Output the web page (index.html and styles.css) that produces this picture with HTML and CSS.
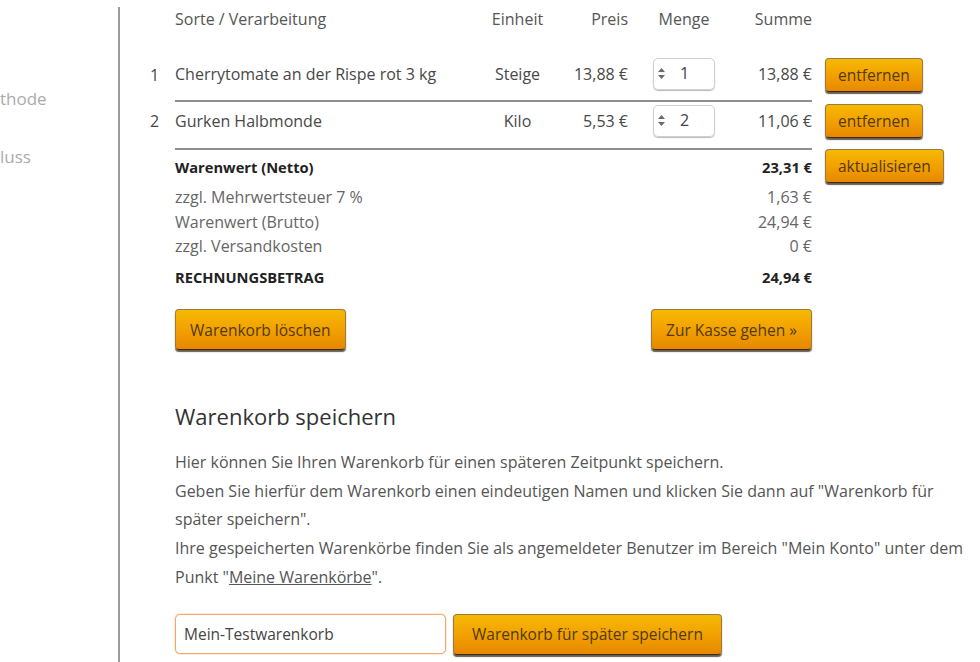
FILE: index.html
```html
<!DOCTYPE html>
<html lang="de">
<head>
  <meta charset="UTF-8">
  <meta name="viewport" content="width=device-width, initial-scale=1.0">
  <title>Warenkorb</title>
  <link rel="stylesheet" href="styles.css">
</head>
<body>
  <div class="page">
    <nav class="sidebar">
      <ul class="steps">
        <li>thode</li>
        <li>luss</li>
      </ul>
    </nav>

    <main class="main">
      <table class="cart">
        <colgroup>
          <col class="c-num">
          <col class="c-name">
          <col class="c-unit">
          <col class="c-price">
          <col class="c-qty">
          <col class="c-sum">
          <col class="c-action">
        </colgroup>
        <thead>
          <tr>
            <th></th>
            <th class="left">Sorte / Verarbeitung</th>
            <th class="center">Einheit</th>
            <th class="right">Preis</th>
            <th class="center qty-head">Menge</th>
            <th class="right">Summe</th>
            <th></th>
          </tr>
        </thead>
        <tbody>
          <tr class="item item-first">
            <td class="num">1</td>
            <td class="line">Cherrytomate an der Rispe rot 3 kg</td>
            <td class="line center">Steige</td>
            <td class="line right">13,88 €</td>
            <td class="line"><span class="qty"><svg width="9" height="15" viewBox="0 0 9 15"><path d="M1 6 L4.5 2 L8 6 Z M1 9 L4.5 13 L8 9 Z" fill="#6a6a6a"/></svg>1</span></td>
            <td class="line right">13,88 €</td>
            <td class="action"><button class="btn">entfernen</button></td>
          </tr>
          <tr class="item item-second">
            <td class="num">2</td>
            <td class="line">Gurken Halbmonde</td>
            <td class="line center">Kilo</td>
            <td class="line right">5,53 €</td>
            <td class="line"><span class="qty"><svg width="9" height="15" viewBox="0 0 9 15"><path d="M1 6 L4.5 2 L8 6 Z M1 9 L4.5 13 L8 9 Z" fill="#6a6a6a"/></svg>2</span></td>
            <td class="line right">11,06 €</td>
            <td class="action"><button class="btn">entfernen</button></td>
          </tr>
          <tr class="sum sum-netto strong">
            <td></td>
            <td colspan="4">Warenwert (Netto)</td>
            <td class="right">23,31 €</td>
            <td class="action"><button class="btn">aktualisieren</button></td>
          </tr>
          <tr class="sum sum-tax">
            <td></td>
            <td colspan="4">zzgl. Mehrwertsteuer 7 %</td>
            <td class="right">1,63 €</td>
            <td></td>
          </tr>
          <tr class="sum">
            <td></td>
            <td colspan="4">Warenwert (Brutto)</td>
            <td class="right">24,94 €</td>
            <td></td>
          </tr>
          <tr class="sum">
            <td></td>
            <td colspan="4">zzgl. Versandkosten</td>
            <td class="right">0 €</td>
            <td></td>
          </tr>
          <tr class="sum sum-total strong">
            <td></td>
            <td colspan="4">RECHNUNGSBETRAG</td>
            <td class="right">24,94 €</td>
            <td></td>
          </tr>
        </tbody>
      </table>

      <div class="cart-actions">
        <button class="btn btn-big">Warenkorb löschen</button>
        <button class="btn btn-big">Zur Kasse gehen »</button>
      </div>

      <section class="save">
        <h2>Warenkorb speichern</h2>
        <p>
          Hier können Sie Ihren Warenkorb für einen späteren Zeitpunkt speichern.<br>
          Geben Sie hierfür dem Warenkorb einen eindeutigen Namen und klicken Sie dann auf "Warenkorb für später speichern".<br>
          Ihre gespeicherten Warenkörbe finden Sie als angemeldeter Benutzer im Bereich "Mein Konto" unter dem Punkt "<a href="#">Meine Warenkörbe</a>".
        </p>
        <form class="save-form">
          <input type="text" class="save-input" value="Mein-Testwarenkorb">
          <button type="button" class="btn btn-big btn-save">Warenkorb für später speichern</button>
        </form>
      </section>
    </main>
  </div>
</body>
</html>
```

FILE: styles.css
```css
body {
  margin: 0;
  font-family: "Open Sans", "Noto Sans", sans-serif;
  font-size: 16px;
  color: #555;
  background: #fff;
}
.page {
  display: flex;
  min-height: 720px;
}
.sidebar {
  width: 118px;
  margin-top: 7px;
  border-right: 2px solid #9c9c9c;
  flex-shrink: 0;
}
.steps {
  list-style: none;
  margin: 80px 0 0;
  padding: 0;
  font-size: 17px;
  color: #ababab;
}
.steps li {
  height: 58px;
  line-height: 24px;
}
.main {
  padding-left: 25px;
  flex: 1;
}

/* Warenkorb-Tabelle */
.cart {
  border-collapse: collapse;
  table-layout: fixed;
  width: 835px;
}
.c-num { width: 30px; }
.c-name { width: 295px; }
.c-unit { width: 95px; }
.c-price { width: 63px; }
.c-qty { width: 97px; }
.c-sum { width: 87px; }
.c-action { width: 168px; }
.cart th {
  font-weight: normal;
  height: 38px;
  padding: 0;
  vertical-align: middle;
  color: #555;
}
.cart th.qty-head {
  padding-left: 15px;
}
.cart td {
  padding: 0;
  vertical-align: middle;
  color: #484848;
}
.left { text-align: left; }
.center { text-align: center; }
.right { text-align: right; }
.num {
  padding-left: 5px !important;
}
.item td.line {
  border-bottom: 2px solid #8e8e8e;
}
.item-first td {
  height: 52px;
  padding-top: 10px;
}
.item-second td {
  height: 38px;
  padding-bottom: 8px;
}
.action {
  padding-left: 13px !important;
}
.sum td {
  height: 24px;
  color: #666;
}
.sum-netto td {
  height: 34px;
  vertical-align: top;
}
.sum-netto td:not(.action) {
  vertical-align: middle;
}
.sum-tax td {
  height: 26px;
}
.sum-total td {
  height: 38px;
}
.strong td {
  font-weight: bold;
  font-size: 14.7px;
  color: #222;
}
.qty {
  display: flex;
  align-items: center;
  gap: 14px;
  width: 62px;
  height: 32px;
  margin-left: 25px;
  padding-left: 3px;
  padding-bottom: 2px;
  box-sizing: border-box;
  border: 1px solid #d0d0d0;
  border-radius: 5px;
  box-shadow: 0 1px 1px #bbb;
  color: #444;
}

/* Buttons */
.btn {
  font-family: inherit;
  font-size: 15.5px;
  color: #533a08;
  background: linear-gradient(#f7b904, #f09c00 60%, #e78800);
  border: 1px solid #9a7a3e;
  border-bottom-color: #3d2a10;
  border-radius: 4px;
  box-shadow: 0 2px 1px rgba(40, 25, 5, 0.7);
  height: 34px;
  padding: 0 12px;
  cursor: pointer;
}
.btn:hover {
  background: linear-gradient(#fcc830, #f0a010);
}
.btn-big {
  height: 41px;
  padding: 0 14px;
}
.btn-save {
  padding: 0 18px;
}
.cart-actions {
  display: flex;
  justify-content: space-between;
  width: 637px;
  margin: 13px 0 0 30px;
}

/* Warenkorb speichern */
.save {
  padding-left: 30px;
  padding-right: 10px;
}
.save h2 {
  font-weight: normal;
  font-size: 22px;
  color: #333;
  margin: 49px 0 0;
  line-height: 34px;
}
.save p {
  margin: 15px 0 0;
  line-height: 28.7px;
  font-size: 16px;
  color: #555;
}
.save a {
  color: #555;
}
.save-form {
  display: flex;
  gap: 7px;
  margin-top: 22px;
}
.save-input {
  width: 271px;
  height: 40px;
  box-sizing: border-box;
  font-family: inherit;
  font-size: 15.5px;
  color: #444;
  padding: 0 8px;
  border: 1px solid #f3a76a;
  border-radius: 5px;
  box-shadow: 0 0 2px #f8b98a;
}
```
